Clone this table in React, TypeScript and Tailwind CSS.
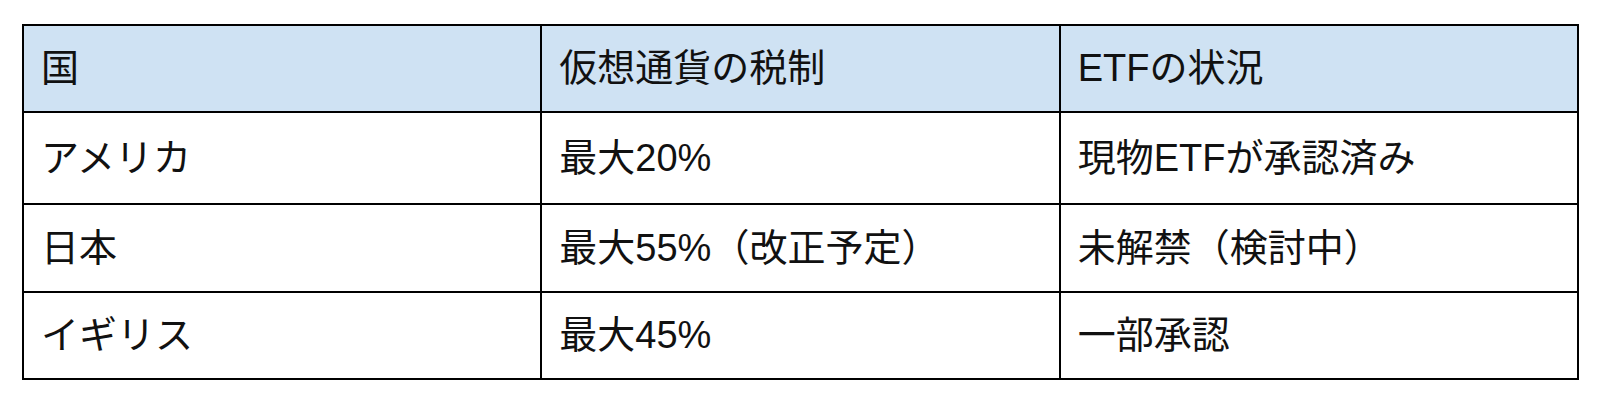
import React from 'react';

const header = ['国', '仮想通貨の税制', 'ETFの状況'];

const rows: { h: string; cells: string[] }[] = [
  { h: 'h-[92px]', cells: ['アメリカ', '最大20%', '現物ETFが承認済み'] },
  { h: 'h-[88px]', cells: ['日本', '最大55%（改正予定）', '未解禁（検討中）'] },
  { h: 'h-[87px]', cells: ['イギリス', '最大45%', '一部承認'] },
];

export default function App() {
  return (
    <div
      className="w-[1600px] h-[405px] bg-white pt-[24px] pl-[22px] text-[38px] text-[#111]"
      style={{ fontFamily: '"Liberation Sans", "Noto Sans CJK JP", sans-serif' }}
    >
      <div className="w-[1557px] grid grid-cols-3 border-l-2 border-t-2 border-black">
        {/* header row */}
        {header.map((label) => (
          <div
            key={label}
            className="h-[87px] flex items-center pl-[17px] bg-[#cfe2f3] border-r-2 border-b-2 border-black"
          >
            {label}
          </div>
        ))}

        {rows.map((row) =>
          row.cells.map((text, i) => (
            <div
              key={row.cells[0] + i}
              className={`${row.h} flex items-center pl-[17px] border-r-2 border-b-2 border-black`}
            >
              {text}
            </div>
          ))
        )}
      </div>
    </div>
  );
}
